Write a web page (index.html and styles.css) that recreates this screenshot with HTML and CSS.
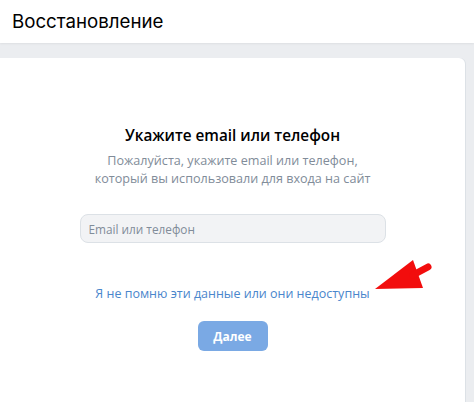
FILE: index.html
```html
<!DOCTYPE html>
<html lang="ru">
<head>
<meta charset="utf-8">
<title>Восстановление</title>
<link rel="stylesheet" href="styles.css">
</head>
<body>
<header class="header">
  <h1 class="header-title">Восстановление</h1>
</header>
<main class="main">
  <section class="card">
    <h2 class="title">Укажите email или телефон</h2>
    <p class="subtitle">Пожалуйста, укажите email или телефон,<br>который вы использовали для входа на сайт</p>
    <input class="field" type="text" placeholder="Email или телефон">
    <a class="link" href="#">Я не помню эти данные или они недоступны</a>
    <button class="btn" type="button">Далее</button>
    <svg class="arrow" width="64" height="40" viewBox="0 0 64 40" aria-hidden="true">
      <polygon points="4,33 42,4 52,32" fill="#f20d0d"/>
      <line x1="42" y1="19" x2="57" y2="11" stroke="#f20d0d" stroke-width="7" stroke-linecap="round"/>
    </svg>
  </section>
</main>
</body>
</html>
```

FILE: styles.css
```css
* { box-sizing: border-box; }
html, body { margin: 0; padding: 0; }
body {
  background: #ebedf0;
  font-family: "Open Sans", "Noto Sans", sans-serif;
  width: 474px;
  height: 402px;
  overflow: hidden;
}
.header {
  height: 43px;
  background: #fff;
  display: flex;
  align-items: center;
  padding-left: 12px;
  box-shadow: 0 1px 2px rgba(0,0,0,0.06);
}
.header-title {
  margin: 0;
  font-family: Inter, sans-serif;
  font-weight: 400;
  font-size: 18.7px;
  color: #000;
  padding-bottom: 1px;
}
.main {
  padding: 15px 9px 0 0;
}
.card {
  position: relative;
  background: #fff;
  border-radius: 0 6px 0 0;
  box-shadow: 1px 0 0 #dce1e6;
  height: 360px;
  display: flex;
  flex-direction: column;
  align-items: center;
  padding-top: 66px;
}
.title {
  margin: 0;
  font-size: 15.3px;
  font-weight: 600;
  color: #000;
  line-height: 22px;
}
.subtitle {
  margin: 6px 0 0;
  font-size: 12.6px;
  line-height: 18px;
  color: #818c99;
  text-align: center;
}
.field {
  margin-top: 26px;
  width: 306px;
  height: 29px;
  border: 1px solid #dce1e6;
  border-radius: 8px;
  background: #f2f3f5;
  padding: 0 8px;
  font-family: inherit;
  font-size: 11.8px;
  color: #000;
}
.field::placeholder { color: #818c99; }
.link {
  margin-top: 42px;
  font-size: 12.5px;
  line-height: 18px;
  color: #4a86cc;
  text-decoration: none;
}
.btn {
  margin-top: 18px;
  width: 70px;
  height: 30px;
  border: 0;
  border-radius: 6px;
  background: #7aa9e4;
  color: #fff;
  font-family: inherit;
  font-size: 12px;
  font-weight: 700;
}
.arrow {
  position: absolute;
  left: 371px;
  top: 198px;
}
```
